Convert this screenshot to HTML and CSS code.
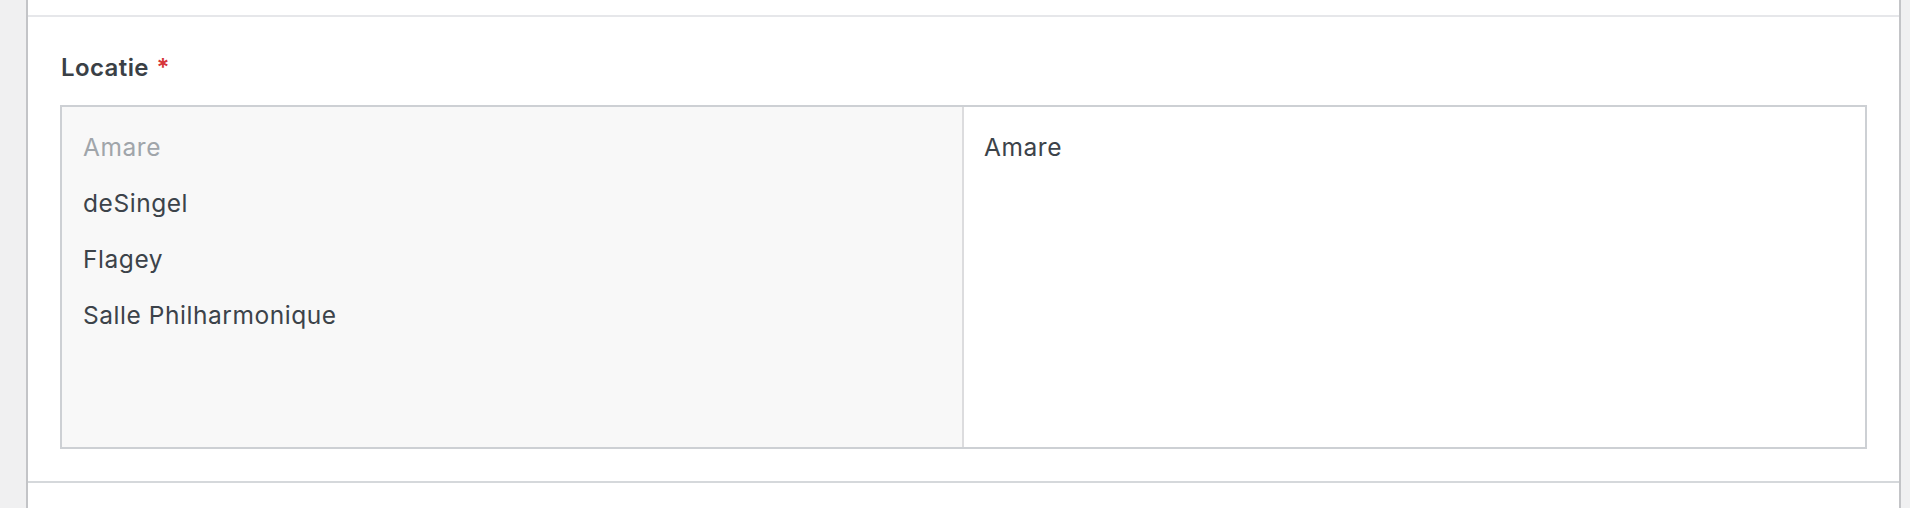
FILE: index.html
```html
<!DOCTYPE html>
<html lang="nl">
<head>
<meta charset="utf-8">
<title>Locatie</title>
<link rel="stylesheet" href="styles.css">
</head>
<body>
<div class="page">
  <div class="card">
    <div class="card-top"></div>
    <div class="field">
      <label class="field-label">Locatie <span class="req">*</span></label>
      <div class="relation">
        <ul class="choices">
          <li class="disabled">Amare</li>
          <li>deSingel</li>
          <li>Flagey</li>
          <li>Salle Philharmonique</li>
        </ul>
        <ul class="values">
          <li>Amare</li>
        </ul>
      </div>
    </div>
    <div class="card-bottom"></div>
  </div>
</div>
</body>
</html>
```
FILE: styles.css
```css
html, body {
  margin: 0;
  padding: 0;
  background: #f0f0f1;
  font-family: Inter, "Noto Sans", sans-serif;
  color: #3c434a;
}
.page {
  padding-left: 26px;
  padding-right: 9px;
  height: 508px;
  box-sizing: border-box;
}
.card {
  background: #fff;
  border-left: 2px solid #c3c4c7;
  border-right: 2px solid #c3c4c7;
  height: 508px;
  box-sizing: border-box;
}
.card-top {
  height: 15px;
  border-bottom: 2px solid #e6e7ea;
}
.field {
  padding: 36px 32px 32px 32px;
  height: 464px;
  box-sizing: border-box;
}
.field-label {
  display: block;
  font-size: 24px;
  font-weight: 600;
  letter-spacing: 0.4px;
  line-height: 30px;
  color: #3a4046;
  margin-left: 1px;
  margin-bottom: 22px;
}
.req {
  color: #d63638;
  margin-left: 1px;
}
.relation {
  display: grid;
  grid-template-columns: 902px 1fr;
  border: 2px solid #cdd0d4;
  height: 344px;
  box-sizing: border-box;
}
.choices, .values {
  list-style: none;
  margin: 0;
  padding: 12px 21px 10px 21px;
  font-size: 24.5px;
  letter-spacing: 0.55px;
  line-height: 36px;
}
.values {
  padding-left: 20px;
}
.choices {
  background: #f8f8f8;
  border-right: 2px solid #dcdcde;
}
.choices li, .values li {
  padding: 10px 0;
  height: 36px;
  line-height: 36px;
}
.choices li.disabled {
  color: #a0a5aa;
}
.card-bottom {
  height: 0;
  border-top: 2px solid #d5d8db;
}
```
